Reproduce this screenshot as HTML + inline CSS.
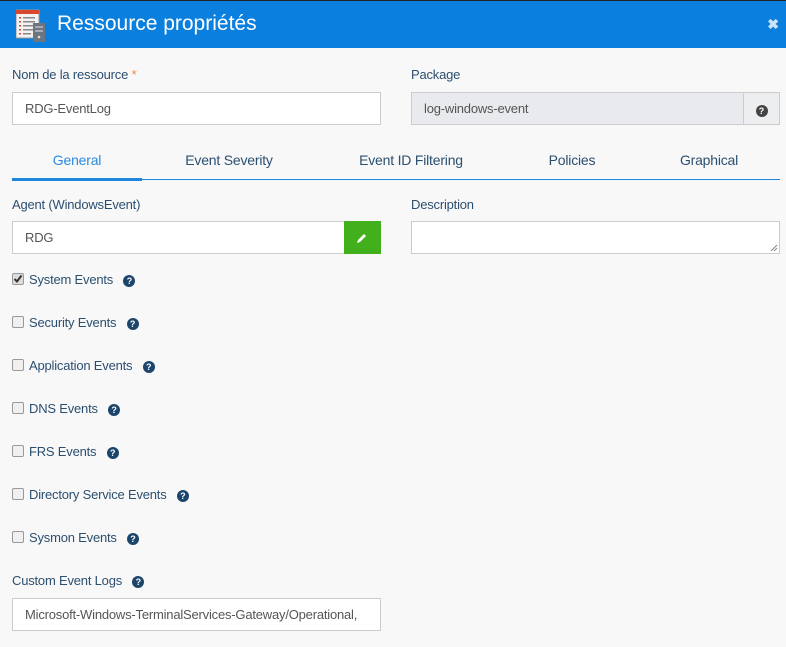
<!DOCTYPE html>
<html><head><meta charset="utf-8"><style>
*{box-sizing:border-box}
body{margin:0;width:786px;height:647px;background:#f8f8f8;font-family:"Liberation Sans",sans-serif;font-size:13px;color:#2c4a66;position:relative;overflow:hidden}
.hdr{position:absolute;left:0;top:0;width:786px;height:48px;background:#0a7fde;border-top:1px solid #222}
.hdr .t{position:absolute;left:57px;top:11px;color:#fff;font-size:21px}
.hdr .x{position:absolute;right:7px;top:15px;color:#cfe3f7;font-size:14px;font-weight:bold}
.lbl{position:absolute;font-size:13px;color:#2c4f70;letter-spacing:-0.2px}
.inp{position:absolute;background:#fff;border:1px solid #ccc;height:33px;padding:8px 12px;color:#555;font-size:13px;letter-spacing:-0.2px}
.tab{position:absolute;top:152px;font-size:14px;color:#2c4f70;transform:translateX(-50%);letter-spacing:-0.2px}
.q{display:inline-block;width:12px;height:12px;border-radius:50%;background:#1c456c;color:#fff;font-size:9px;font-weight:bold;text-align:center;line-height:12px;vertical-align:middle}
.cb{position:absolute;left:12px;width:12px;height:12px;border:1px solid #999;border-radius:2px;background:#f0f0f0}
.cl{position:absolute;left:29px;font-size:13px;color:#2c4f70;letter-spacing:-0.2px}
</style></head><body>
<div class="hdr">
<svg style="position:absolute;left:16px;top:8px" width="30" height="33" viewBox="0 0 30 33">
<rect x="0" y="1" width="23" height="28" fill="#f2f2f2" stroke="#999"/>
<rect x="0" y="1" width="23" height="4" fill="#d9472f"/>
<g fill="#d9472f"><rect x="3" y="8" width="2" height="1.5"/><rect x="3" y="12" width="2" height="1.5"/><rect x="3" y="16" width="2" height="1.5"/><rect x="3" y="20" width="2" height="1.5"/><rect x="3" y="24" width="2" height="1.5"/></g>
<g fill="#888"><rect x="7" y="8" width="12" height="1.5"/><rect x="7" y="12" width="12" height="1.5"/><rect x="7" y="16" width="10" height="1.5"/><rect x="7" y="20" width="12" height="1.5"/><rect x="7" y="24" width="8" height="1.5"/></g>
<rect x="17" y="14" width="12" height="19" fill="#6b7680"/><rect x="19" y="17" width="8" height="2" fill="#aab"/><rect x="19" y="21" width="8" height="2" fill="#aab"/><circle cx="23" cy="28" r="1.3" fill="#ddd"/>
</svg>
<div class="t">Ressource propriétés</div><div class="x">✖</div></div>

<div class="lbl" style="left:12px;top:67px">Nom de la ressource <span style="color:#f08a3c">*</span></div>
<div class="inp" style="left:12px;top:92px;width:369px">RDG-EventLog</div>
<div class="lbl" style="left:411px;top:67px">Package</div>
<div class="inp" style="left:411px;top:92px;width:369px;height:33px;background:#e8eaed;border-color:#ccc">log-windows-event</div>
<div style="position:absolute;left:743px;top:92px;width:37px;height:33px;border:1px solid #ccc;background:#eceef0;text-align:center;padding-top:9px"><span class="q" style="background:#444">?</span></div>

<div style="position:absolute;left:12px;top:179px;width:768px;height:1px;background:#1f86de"></div>
<div style="position:absolute;left:12px;top:178px;width:130px;height:3px;background:#1f86de"></div>
<div class="tab" style="left:77px;color:#2a8ae2">General</div>
<div class="tab" style="left:229px">Event Severity</div>
<div class="tab" style="left:411px">Event ID Filtering</div>
<div class="tab" style="left:572px">Policies</div>
<div class="tab" style="left:709px">Graphical</div>

<div class="lbl" style="left:12px;top:197px">Agent (WindowsEvent)</div>
<div class="inp" style="left:12px;top:221px;width:333px">RDG</div>
<div style="position:absolute;left:344px;top:221px;width:37px;height:33px;background:#41b01c">
<svg style="position:absolute;left:12px;top:11px" width="12" height="12" viewBox="0 0 12 12"><path d="M1 11 L2 8 L8 2 L10 4 L4 10 Z" fill="#fff"/></svg></div>
<div class="lbl" style="left:411px;top:197px">Description</div>
<div class="inp" style="left:411px;top:221px;width:369px"><svg style="position:absolute;right:1px;bottom:1px" width="8" height="8"><path d="M1 7 L7 1 M4 7 L7 4" stroke="#888" stroke-width="1"/></svg></div>

<div class="cb" style="top:273px;background:#ddd"><svg width="10" height="10" style="position:absolute;left:0;top:0"><path d="M1.5 5 L4 7.5 L8.5 1.5" stroke="#333" stroke-width="2" fill="none"/></svg></div>
<div class="cl" style="top:272px">System Events &nbsp;&nbsp;<span class="q">?</span></div>
<div class="cb" style="top:316px"></div><div class="cl" style="top:315px">Security Events &nbsp;&nbsp;<span class="q">?</span></div>
<div class="cb" style="top:359px"></div><div class="cl" style="top:358px">Application Events &nbsp;&nbsp;<span class="q">?</span></div>
<div class="cb" style="top:402px"></div><div class="cl" style="top:401px">DNS Events &nbsp;&nbsp;<span class="q">?</span></div>
<div class="cb" style="top:445px"></div><div class="cl" style="top:444px">FRS Events &nbsp;&nbsp;<span class="q">?</span></div>
<div class="cb" style="top:488px"></div><div class="cl" style="top:487px">Directory Service Events &nbsp;&nbsp;<span class="q">?</span></div>
<div class="cb" style="top:531px"></div><div class="cl" style="top:530px">Sysmon Events &nbsp;&nbsp;<span class="q">?</span></div>

<div class="lbl" style="left:12px;top:573px">Custom Event Logs &nbsp;&nbsp;<span class="q">?</span></div>
<div class="inp" style="left:12px;top:598px;width:369px;white-space:nowrap;overflow:hidden">Microsoft-Windows-TerminalServices-Gateway/Operational,</div>
</body></html>
